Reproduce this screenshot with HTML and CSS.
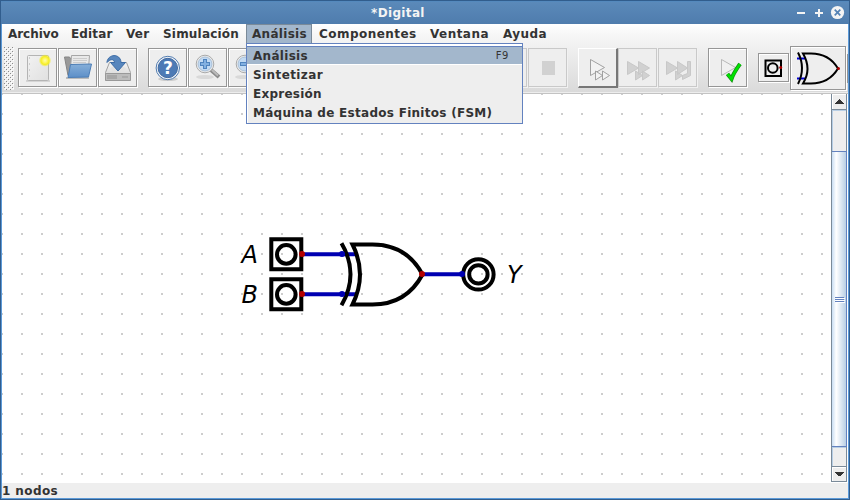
FILE: index.html
```html
<!DOCTYPE html>
<html lang="es">
<head>
<meta charset="utf-8">
<title>*Digital</title>
<link rel="stylesheet" href="styles.css">
</head>
<body>
<div class="window">
  <header class="titlebar">
    <span class="title">*Digital</span>
    <svg class="controls" width="60" height="20" viewBox="790 3 60 20">
      <path d="M797 13h8M815 13h8M819 9v8" stroke="#f4f4f4" stroke-width="2"/>
      <circle cx="837.5" cy="12.5" r="6.6" fill="#f4f4f4"/>
      <path d="M834.7 9.7l5.6 5.6M840.3 9.7l-5.6 5.6" stroke="#5583b5" stroke-width="1.7"/>
    </svg>
  </header>
  <div class="top">
    <nav class="menubar">
      <span class="menu archivo">Archivo</span>
      <span class="menu editar">Editar</span>
      <span class="menu ver">Ver</span>
      <span class="menu simulacion">Simulación</span>
      <span class="menu analisis open">Análisis</span>
      <span class="menu componentes">Componentes</span>
      <span class="menu ventana">Ventana</span>
      <span class="menu ayuda">Ayuda</span>
    </nav>
    <div class="dropdown">
      <div class="entry selected"><span>Análisis</span><span class="key">F9</span></div>
      <div class="entry e2"><span>Sintetizar</span></div>
      <div class="entry e3"><span>Expresión</span></div>
      <div class="entry e4"><span>Máquina de Estados Finitos (FSM)</span></div>
    </div>
    <div class="toolbar">
      <svg class="grip" width="10" height="43"><defs><pattern id="grip" width="4" height="4" patternUnits="userSpaceOnUse"><path d="M0 0h1v1H0zM2 2h1v1H2z" fill="#8c8c8c"/><path d="M1 1h1v1H1zM3 3h1v1H3z" fill="#fff"/></pattern></defs><rect width="10" height="43" fill="url(#grip)"/></svg>
      <span class="btn"><svg viewBox="18 48 39 39"><defs><linearGradient id="paper" x2="1" y2="1"><stop stop-color="#f2f2f2"/><stop offset="1" stop-color="#e0e0e0"/></linearGradient><radialGradient id="sun"><stop stop-color="#fffbb0"/><stop offset=".3" stop-color="#fff86a"/><stop offset=".65" stop-color="#f5ed25"/><stop offset="1" stop-color="#f5ed25" stop-opacity="0"/></radialGradient></defs><path d="M26 81h24" stroke="#bbb"/><rect x="27.5" y="55.5" width="21" height="25" rx="1" fill="url(#paper)" stroke="#b4b4b4"/><path d="M29.500 57v22" stroke="#ccc" stroke-dasharray="2 4"/><circle cx="45" cy="60.500" r="6.300" fill="url(#sun)"/></svg></span>
      <span class="btn"><svg viewBox="58 48 39 39"><defs><linearGradient id="folder" x2="0" y2="1"><stop stop-color="#86afd9"/><stop offset="1" stop-color="#5d8fc8"/></linearGradient></defs><path d="M66 78h23" stroke="#bbb" stroke-width="2"/><path d="M64.500 57h5l1 1.500h17l-1 17H68z" fill="#999" stroke="#858585"/><path d="M71.500 55.500h18l-1 13h-18z" fill="#e9e9e9" stroke="#a6a6a6"/><path d="M73 58.500h14M73 60.500h14M73 62.500h13" stroke="#ccc"/><path d="M70.500 64.500l21-.500-3 13-20.500.500z" fill="url(#folder)" stroke="#4b7db6"/></svg></span>
      <span class="btn"><svg viewBox="98 48 39 39"><defs><linearGradient id="disk" x2="0" y2="1"><stop stop-color="#f5f5f5"/><stop offset="1" stop-color="#d0d0d0"/></linearGradient></defs><path d="M109.500 62.500h17l4 10v7.500h-25v-7.500z" fill="url(#disk)" stroke="#a2a2a2"/><path d="M105.500 73.500h25v7h-25z" fill="#bcbcbc" stroke="#999"/><path d="M108 75v4M110 75v4M112 75v4M114 75v4M116 75v4" stroke="#929292"/><path d="M122 77h6" stroke="#999"/><ellipse cx="118" cy="69" rx="8" ry="3" fill="#e2e2e2"/><path d="M107 62c1-8 13-9 14 0v.500h4.500l-7.500 8.500-7.500-8.500h4c-.500-4-4.500-3.500-7.500 0z" fill="#5786bd" stroke="#3c6ca6"/></svg></span>
      <span class="gap"></span>
      <span class="btn"><svg viewBox="148 48 39 39"><ellipse cx="168" cy="79" rx="10" ry="2" fill="#ccc"/><circle cx="167.800" cy="68" r="11.700" fill="#f4f6f9" stroke="#4e79ae"/><circle cx="167.800" cy="68" r="9.700" fill="#4d7ab5" stroke="#40699f"/><text class="question" x="168" y="73.500" text-anchor="middle">?</text></svg></span>
      <span class="btn"><svg viewBox="188 48 39 39"><ellipse cx="205" cy="77" rx="9" ry="2" fill="#d9d9d9"/><path d="M211 70l8 7" stroke="#8c8c8c" stroke-width="4"/><path d="M212 70l6 5.500" stroke="#bbb" stroke-width="2"/><circle cx="205" cy="64" r="8.800" fill="#eee" stroke="#aaa"/><circle cx="205" cy="64" r="7" fill="#c2daf3" stroke="#a9bfd6"/><path d="M200 64h10M205 59v10" stroke="#4f84bf" stroke-width="4"/><path d="M201 64h8M205 60v8" stroke="#82b0e1" stroke-width="2"/></svg></span>
      <span class="btn"><svg viewBox="228 48 39 39"><ellipse cx="244" cy="77" rx="9" ry="2" fill="#d9d9d9"/><circle cx="245" cy="64" r="8.800" fill="#eee" stroke="#aaa"/><circle cx="245" cy="64" r="7" fill="#c2daf3" stroke="#a9bfd6"/><path d="M240 64h10" stroke="#4f84bf" stroke-width="4"/><path d="M241 64h8" stroke="#82b0e1" stroke-width="2"/></svg></span>
      <span class="hidden-tools"></span>
      <span class="btn off"></span>
      <span class="btn off"><svg viewBox="528 48 39 39"><rect x="542" y="61" width="13" height="14" fill="#d1d1d1"/></svg></span>
      <span class="gap"></span>
      <span class="btn raised"><svg viewBox="578 48 39 39"><g fill="#f3f3f3" stroke="#999" stroke-width=".9"><path d="M590.500 59.500v16l14-8z"/><path d="M595.500 71v9l7-4.500zM602.500 71v9l7-4.500z"/></g></svg></span>
      <span class="btn off"><svg viewBox="618 48 39 39"><g fill="#d1d1d1" stroke="#c8c8c8"><path d="M627.500 61.500v13l11-6.500zM638.500 61.500v13l11-6.500zM635.500 71v9l7-4.500zM642.500 71v9l7-4.500z"/></g></svg></span>
      <span class="btn off"><svg viewBox="658 48 39 39"><g fill="#d1d1d1" stroke="#c8c8c8"><path d="M666.500 61.500v13l11-6.500zM677.500 61.500v13l10-6.500zM687.500 61.500h3v14l-8 4v-4l5-2zM675.500 71v9l7-4.500z"/></g></svg></span>
      <span class="gap"></span>
      <span class="btn"><svg viewBox="708 48 39 39"><path d="M721.500 59.500v16l14-8z" fill="#f0f0f0" stroke="#aaa" stroke-width=".8"/><path d="M727.500 74l4 5c2-6 5-10 8.500-15" fill="none" stroke="#168916" stroke-width="4"/><path d="M727.500 74l4 5c2-6 5-10 8.500-15" fill="none" stroke="#00e100" stroke-width="2.600"/></svg></span>
      <span class="gap"></span>
      <span class="btn part"><svg viewBox="758 53 30 28"><g fill="none" stroke="#000" stroke-width="2"><rect x="765.500" y="60.500" width="15.500" height="15.500"/><circle cx="772.800" cy="68" r="4.800"/></g><circle cx="780.700" cy="67.500" r="1.500" fill="#b00000"/></svg></span>
      <span class="btn gate"><svg viewBox="790 46 55 43"><path d="M797 58.500h8M797 78.500h8" stroke="#0000d0" stroke-width="2"/><path d="M798 52.500q8 15.500 0 31.500M803 53.500q9 15.500 0 30h8q18 0 27-15-9-15-27-15z" fill="none" stroke="#000" stroke-width="2"/><circle cx="838.500" cy="68.500" r="1.500" fill="#b00000"/></svg></span>
      <span class="next"></span>
    </div>
  </div>
  <main class="work">
    <svg class="circuit" width="829" height="389" viewBox="2 94 829 389">
      <defs><pattern id="dots" x="1" y="93" width="20" height="20" patternUnits="userSpaceOnUse"><path d="M0 0h2v2H0z" fill="#cdcdcd"/></pattern></defs>
      <rect x="2" y="94" width="829" height="389" fill="url(#dots)"/>
      <g fill="none" stroke="#0000b2" stroke-width="4"><path d="M302 254.300h54M302 294.300h54M422 274.300h41"/></g>
      <g fill="none" stroke="#000" stroke-width="4">
        <path d="M271.300 239.300h30v30h-30zM271.300 279.300h30v30h-30z"/>
        <circle cx="286.300" cy="254.400" r="9.300"/><circle cx="286.300" cy="294.400" r="9.300"/>
        <path d="M341.500 243.300q18 31 0 62M352.500 244.500q15 30 0 60h20q34 0 50-30-16-30-50-30z"/>
        <circle cx="478.400" cy="274.400" r="15.200"/><circle cx="478.400" cy="274.400" r="9.200"/>
      </g>
      <g fill="#0000b2"><circle cx="342" cy="254" r="3"/><circle cx="342" cy="294" r="3"/><circle cx="462" cy="274" r="3"/></g>
      <g fill="#b20000"><circle cx="302" cy="254" r="3"/><circle cx="302" cy="294" r="3"/><circle cx="422" cy="274" r="3"/></g>
      <g class="label"><text x="241.500" y="263">A</text><text x="241.500" y="303">B</text><text x="507" y="283">Y</text></g>
    </svg>
    <div class="scrollbar">
      <span class="arrow"><svg width="9" height="5" viewBox="0 0 9 5"><path d="M4 0h1v1h1v1h1v1h1v1h1v1H0V4h1V3h1V2h1V1h1z" fill="#333"/></svg></span>
      <span class="track"></span>
      <span class="thumb"><i></i><i></i><i></i></span>
      <span class="track end"></span>
      <span class="arrow down"><svg width="9" height="5" viewBox="0 0 9 5"><path d="M0 0h9v1H8v1H7v1H6v1H3V3H2V2H1V1H0z" fill="#333"/></svg></span>
    </div>
  </main>
  <footer class="status">1 nodos</footer>
</div>
</body>
</html>
```
FILE: styles.css
```css
* { box-sizing: border-box; }
body { margin: 0; font: bold 12px "DejaVu Sans", sans-serif; color: #333; }
.window { width: 850px; height: 500px; display: flex; flex-direction: column; background: #eee; border: 1px solid #315d8d; border-top: 0; box-shadow: inset 1px 0 #5c9ad8, inset -1px 0 #5c9ad8, inset 0 -1px #5c9ad8; padding: 0 1px 1px; overflow: hidden; }
.titlebar { height: 24px; flex: none; margin: 0 -1px; display: flex; align-items: center; background: linear-gradient(#5b8aba, #4f7cad); border-top: 1px solid #315d8d; box-shadow: inset 0 1px #5489bd; }
.title { width: 789px; flex: none; padding-left: 370px; color: #f4f4f4; font-size: 12px; line-height: 14px; padding-top: 1px; letter-spacing: .35px; }
.controls { flex: none; }
.top { position: relative; height: 70px; flex: none; background: linear-gradient(#fff 0, #f7f7f7 10px, #dadada 68px); border-bottom: 1px solid #c3c3c3; box-shadow: inset 0 -1px #ededed; }
.menubar { display: flex; height: 19px; }
.menu { flex: none; padding-left: 6px; line-height: 21px; height: 19px; letter-spacing: .45px; white-space: nowrap; }
.archivo { width: 63px; letter-spacing: -.05px; }
.editar { width: 55px; letter-spacing: .15px; }
.ver { width: 37px; letter-spacing: .2px; }
.simulacion { width: 89px; letter-spacing: .2px; }
.analisis { width: 67px; }
.componentes { width: 111px; }
.ventana { width: 73px; }
.open { width: 66px; margin-right: 1px; background: #a3b7cc; border: 1px solid #7a8a99; border-bottom: 0; padding-left: 5px; line-height: 19px; letter-spacing: .3px; }
.dropdown { position: absolute; z-index: 2; left: 244px; top: 19px; width: 277px; height: 81px; border: 1px solid #6382bf; background: #eee; padding-top: 2px; box-shadow: inset 1px 2px #fff; }
.entry { height: 19px; display: flex; justify-content: space-between; padding: 0 13px 0 6px; line-height: 21px; letter-spacing: .3px; white-space: nowrap; }
.selected { background: #a3b7cc; border-top: 1px solid #6382bf; border-bottom: 1px solid #fff; line-height: 18px; }
.e2 { letter-spacing: .4px; }
.e3 { letter-spacing: .25px; }
.e4 { letter-spacing: .28px; }
.key { font-weight: normal; font-size: 10px; line-height: 18px; letter-spacing: .6px; }
.toolbar { display: flex; align-items: center; height: 50px; padding-left: 2px; }
.grip { flex: none; margin-right: 4px; background: #f0f0f0; }
.btn { width: 39px; height: 39px; flex: none; margin: 0 1px 1px 0; background: #eee; border: 1px solid #969696; box-shadow: 1px 1px #fff, inset 1px 1px #fff; }
.btn svg { display: block; width: 39px; height: 39px; margin: -1px; }
.gap { width: 10px; flex: none; }
.hidden-tools { width: 220px; flex: none; }
.off { border-color: #c9c9c9; box-shadow: 1px 1px #f1f1f1; }
.raised { width: 40px; height: 40px; margin: 0; border-width: 1px 2px 2px 1px; border-color: #fff #777 #777 #fff; box-shadow: none; }
.part { width: 31px; height: 29px; }
.part svg { width: 30px; height: 28px; margin: -1px; }
.gate { width: 56px; height: 44px; margin-bottom: 0; }
.gate svg { width: 55px; height: 43px; margin: -1px; }
.next { width: 1px; height: 29px; background: #969696; }
.question { font: bold 17px "DejaVu Sans", sans-serif; fill: #fff; }
.work { display: flex; height: 389px; flex: none; background: #fff; }
.circuit { display: block; flex: none; }
.label { font: italic 24px "DejaVu Sans", sans-serif; fill: #000; }
.scrollbar { width: 17px; padding-right: 1px; height: 388px; display: flex; flex-direction: column; border-left: 1px solid #7a8a99; }
.arrow { height: 16px; display: flex; align-items: center; justify-content: center; background: #eee; border: solid #7a8a99; border-width: 0 1px 1px 0; box-shadow: inset 1px 1px #fff; }
.arrow svg { margin-left: 1px; }
.track { height: 41px; background: #eee; border-right: 1px solid #7a8a99; box-shadow: inset 1px 1px #b8cfe5; }
.thumb { height: 296px; display: flex; flex-direction: column; align-items: center; justify-content: center; gap: 1px; border: 1px solid #6382bf; border-left: 0; background: linear-gradient(90deg, #c8ddf2, #fff 30%, #b8cfe5); }
.thumb i { width: 9px; height: 1px; background: #6382bf; box-shadow: 1px 1px #fff; }
.end { height: 20px; border-bottom: 1px solid #7a8a99; }
.down { height: 15px; }
.status { height: 16px; line-height: 16px; letter-spacing: .4px; }
```
